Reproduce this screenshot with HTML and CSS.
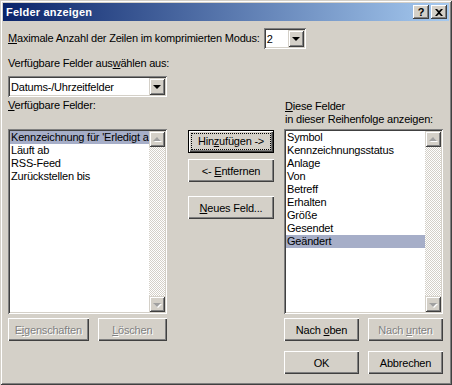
FILE: index.html
```html
<!DOCTYPE html>
<html lang="de">
<head>
  <meta charset="UTF-8">
  <title>Felder anzeigen</title>
  <link rel="stylesheet" href="styles.css">
</head>
<body>
<div class="window">
  <div class="titlebar">
    <span class="title">Felder anzeigen</span>
    <div class="caption-buttons">
      <span class="cap-btn cap-help">?</span>
      <span class="cap-btn">
        <svg width="8" height="7" viewBox="0 0 8 7"><path d="M0 0h2l2 2 2-2h2L5 3.5 8 7H6L4 5 2 7H0l3-3.5z" fill="#000"/></svg>
      </span>
    </div>
  </div>

  <div class="content">
    <!-- Anzahl der Zeilen -->
    <div class="row-max">
      <span class="lbl"><u>M</u>aximale Anzahl der Zeilen im komprimierten Modus:</span>
      <div class="combo combo-small">
        <span class="combo-value">2</span>
        <span class="combo-arrow"><span class="tri"></span></span>
      </div>
    </div>

    <div class="lbl lbl-source">Verfügbare Felder aus<u>w</u>ählen aus:</div>
    <div class="combo combo-wide">
      <span class="combo-value">Datums-/Uhrzeitfelder</span>
      <span class="combo-arrow"><span class="tri"></span></span>
    </div>

    <!-- Felder -->
    <div class="fields">
      <div class="lbl lbl-left"><u>V</u>erfügbare Felder:</div>
      <div class="lbl lbl-right"><u>D</u>iese Felder<br>in dieser Reihenfolge anzeigen:</div>

      <div class="listbox">
        <div class="items">
          <div class="item selected">Kennzeichnung für 'Erledigt a</div>
          <div class="item">Läuft ab</div>
          <div class="item">RSS-Feed</div>
          <div class="item">Zurückstellen bis</div>
        </div>
        <div class="scrollbar">
          <span class="sb-btn"><span class="tri tri-up"></span></span>
          <span class="sb-track"></span>
          <span class="sb-btn"><span class="tri tri-down"></span></span>
        </div>
      </div>

      <div class="mid-buttons">
        <button class="btn btn-default"><span class="focus">Hin<u>z</u>ufügen -&gt;</span></button>
        <button class="btn">&lt;- <u>E</u>ntfernen</button>
        <button class="btn btn-new"><u>N</u>eues Feld...</button>
      </div>

      <div class="listbox">
        <div class="items">
          <div class="item">Symbol</div>
          <div class="item">Kennzeichnungsstatus</div>
          <div class="item">Anlage</div>
          <div class="item">Von</div>
          <div class="item">Betreff</div>
          <div class="item">Erhalten</div>
          <div class="item">Größe</div>
          <div class="item">Gesendet</div>
          <div class="item selected">Geändert</div>
        </div>
        <div class="scrollbar">
          <span class="sb-btn"><span class="tri tri-up"></span></span>
          <span class="sb-track"></span>
          <span class="sb-btn"><span class="tri tri-down"></span></span>
        </div>
      </div>

      <div class="btn-pair">
        <button class="btn btn-wide" disabled>E<u>i</u>genschaften</button>
        <button class="btn" disabled><u>L</u>öschen</button>
      </div>
      <div class="btn-pair pair-right">
        <button class="btn">Nach <u>o</u>ben</button>
        <button class="btn" disabled>Nach <u>u</u>nten</button>
      </div>
      <div class="btn-pair pair-right pair-dialog">
        <button class="btn">OK</button>
        <button class="btn">Abbrechen</button>
      </div>
    </div>
  </div>
</div>
</body>
</html>
```

FILE: styles.css
```css
body {
  margin: 0;
  background: #d4d0c8;
  font-family: "Liberation Sans", Arial, sans-serif;
  font-size: 11px;
  letter-spacing: -0.2px;
  color: #000;
}

u {
  text-decoration: underline;
  text-underline-offset: 1px;
}

.window {
  box-sizing: border-box;
  width: 452px;
  height: 385px;
  background: #d4d0c8;
  padding: 3px;
  box-shadow: inset 1px 1px #d4d0c8, inset -1px -1px #404040,
              inset 2px 2px #ffffff, inset -2px -2px #808080;
}

/* Titelleiste */
.titlebar {
  height: 18px;
  display: flex;
  align-items: center;
  justify-content: space-between;
  background: linear-gradient(to right, #0a246a, #a6caf0);
  padding: 0 2px 0 3px;
}

.title {
  color: #fff;
  font-weight: bold;
  font-size: 11px;
  letter-spacing: 0.2px;
}

.caption-buttons {
  display: flex;
  gap: 2px;
}

.cap-btn {
  box-sizing: border-box;
  width: 16px;
  height: 14px;
  display: flex;
  align-items: center;
  justify-content: center;
  background: #d4d0c8;
  box-shadow: inset -1px -1px #404040, inset 1px 1px #ffffff, inset -2px -2px #808080;
}

.cap-help {
  font-weight: bold;
  font-size: 11px;
  line-height: 14px;
}

/* Inhalt */
.content {
  padding: 0 6px 0 5px;
}

.lbl {
  line-height: 13px;
  white-space: nowrap;
}

.row-max {
  display: flex;
  align-items: center;
  gap: 4px;
  margin-top: 7px;
}

.lbl-source {
  margin-top: 8px;
}

.combo {
  box-sizing: border-box;
  height: 21px;
  display: flex;
  align-items: center;
  background: #fff;
  padding: 2px;
  box-shadow: inset 1px 1px #808080, inset -1px -1px #ffffff,
              inset 2px 2px #404040, inset -2px -2px #d4d0c8;
}

.combo-small {
  width: 42px;
}

.combo-wide {
  width: 159px;
  margin-top: 6px;
}

.combo-value {
  flex: 1;
  padding-left: 1px;
  white-space: nowrap;
  overflow: hidden;
}

.combo-arrow,
.sb-btn {
  box-sizing: border-box;
  width: 16px;
  height: 17px;
  display: flex;
  align-items: center;
  justify-content: center;
  background: #d4d0c8;
  box-shadow: inset 1px 1px #d4d0c8, inset -1px -1px #404040,
              inset 2px 2px #ffffff, inset -2px -2px #808080;
}

.tri {
  width: 0;
  height: 0;
  border-left: 4px solid transparent;
  border-right: 4px solid transparent;
  border-top: 4px solid #000;
  margin-top: 1px;
}

.tri-up,
.tri-down {
  border-top-color: #a0a0a0;
  filter: drop-shadow(1px 1px 0 #fff);
}

.tri-up {
  border-top: 0;
  border-bottom: 4px solid #a0a0a0;
  margin-top: -1px;
}

/* Feldauswahl */
.fields {
  display: grid;
  grid-template-columns: 159px 1fr 159px;
  grid-template-rows: 32px 185px 27px 33px;
}

.lbl-left {
  align-self: start;
  margin-top: 2px;
}

.lbl-right {
  grid-column: 3;
  align-self: end;
  padding: 0 0 3px 1px;
}

.listbox {
  box-sizing: border-box;
  display: flex;
  background: #fff;
  padding: 2px;
  box-shadow: inset 1px 1px #808080, inset -1px -1px #ffffff,
              inset 2px 2px #404040, inset -2px -2px #d4d0c8;
}

.items {
  flex: 1;
  min-width: 0;
}

.item {
  height: 13px;
  line-height: 13px;
  padding-left: 1px;
  white-space: nowrap;
}

.item.selected {
  background: #a6aec8;
}

.scrollbar {
  width: 16px;
  display: flex;
  flex-direction: column;
}

.sb-btn {
  height: 16px;
}

.sb-track {
  flex: 1;
  background-image: conic-gradient(#ffffff 25%, #d4d0c8 0 50%, #ffffff 0 75%, #d4d0c8 0);
  background-size: 2px 2px;
}

/* Schaltflächen */
.mid-buttons {
  display: flex;
  flex-direction: column;
  gap: 6px;
  margin: 1px 0 0 21px;
}

.btn {
  box-sizing: border-box;
  width: 75px;
  height: 23px;
  padding: 0;
  border: 0;
  background: #d4d0c8;
  font-family: inherit;
  font-size: 11px;
  letter-spacing: -0.2px;
  color: #000;
  white-space: nowrap;
  box-shadow: inset 1px 1px #ffffff, inset -1px -1px #404040,
              inset -2px -2px #808080;
}

.mid-buttons .btn {
  width: 86px;
}

.btn-new {
  margin-top: 8px;
}

.btn-default {
  box-shadow: inset 0 0 0 1px #000, inset 2px 2px #ffffff,
              inset -2px -2px #404040, inset -3px -3px #808080;
}

.focus {
  display: block;
  margin: 0 4px;
  height: 15px;
  line-height: 15px;
  outline: 1px dotted #000;
  outline-offset: 0;
}

.btn:disabled {
  color: #808080;
  text-shadow: 1px 1px 0 #fff;
}

.btn-wide {
  width: 87px;
}

.btn-pair {
  display: flex;
  gap: 9px;
  align-self: end;
}

.pair-right {
  grid-column: 3;
}

.pair-dialog {
  grid-row: 4;
}
```
